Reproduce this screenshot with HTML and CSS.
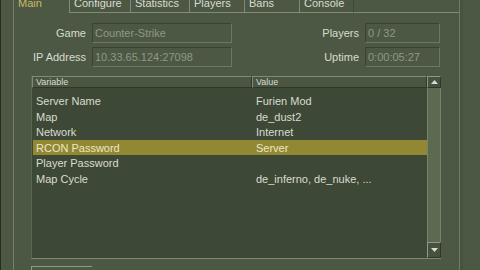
FILE: index.html
```html
<!DOCTYPE html>
<html>
<head>
<meta charset="utf-8">
<link rel="stylesheet" href="styles.css">
</head>
<body>
<div class="window">
  <div class="left-edge"></div>
  <div class="main">
    <div class="tabs">
      <div class="tab active">Main</div>
      <div class="tab w61">Configure</div>
      <div class="tab w58">Statistics</div>
      <div class="tab w55">Players</div>
      <div class="tab w55">Bans</div>
      <div class="tab w55 last">Console</div>
      <div class="tab-filler"></div>
    </div>
    <div class="sheet">
      <div class="fields">
        <div class="label">Game</div>
        <div class="box">Counter-Strike</div>
        <div class="label">Players</div>
        <div class="box">0 / 32</div>
        <div class="label">IP Address</div>
        <div class="box">10.33.65.124:27098</div>
        <div class="label">Uptime</div>
        <div class="box">0:00:05:27</div>
      </div>
      <div class="list">
        <div class="list-main">
          <div class="list-head">
            <div class="head-cell">Variable</div>
            <div class="head-cell">Value</div>
          </div>
          <div class="list-body">
            <div class="row"><span>Server Name</span><span>Furien Mod</span></div>
            <div class="row"><span>Map</span><span>de_dust2</span></div>
            <div class="row"><span>Network</span><span>Internet</span></div>
            <div class="row selected"><span>RCON Password</span><span>Server</span></div>
            <div class="row"><span>Player Password</span><span></span></div>
            <div class="row"><span>Map Cycle</span><span>de_inferno, de_nuke, ...</span></div>
          </div>
        </div>
        <div class="scroll">
          <div class="sbtn up"><svg width="7" height="4" viewBox="0 0 7 4"><polygon points="3.5,0 7,4 0,4" fill="#d8dccf"/></svg></div>
          <div class="track"></div>
          <div class="sbtn down"><svg width="7" height="4" viewBox="0 0 7 4"><polygon points="0,0 7,0 3.5,4" fill="#d8dccf"/></svg></div>
        </div>
      </div>
      <div class="bottom">
        <div class="button"></div>
      </div>
    </div>
  </div>
  <div class="right-edge"></div>
</div>
</body>
</html>
```

FILE: styles.css
```css
html, body {
  margin: 0;
  padding: 0;
}
body {
  width: 480px;
  height: 270px;
  overflow: hidden;
  background: #4c5844;
  font-family: "Liberation Sans", Arial, sans-serif;
  font-size: 11px;
  color: #d8dccf;
}
.window {
  display: flex;
  height: 270px;
}
.left-edge {
  flex: none;
  width: 14px;
  box-sizing: border-box;
  border-left: 1px solid #262c21;
  border-right: 1px solid #74806a;
}
.main {
  width: 446px;
  flex: none;
  display: flex;
  flex-direction: column;
  border-right: 1px solid #6f7b65;
  box-sizing: border-box;
}
.right-edge {
  flex: 1;
  border-left: 3px solid #48533f;
}
.tabs {
  display: flex;
  height: 16px;
  margin-top: -3px;
  flex: none;
}
.tab {
  box-sizing: border-box;
  height: 16px;
  line-height: 13px;
  padding-left: 4px;
  border-bottom: 1px solid #7f8b74;
  border-left: 1px solid #7f8b74;
  white-space: nowrap;
}
.tab.active {
  width: 55px;
  border: none;
  color: #c9b865;
  padding-left: 4px;
}
.tab.last {
  border-right: 1px solid #3f4837;
}
.w61 { width: 61px; }
.w58 { width: 59px; }
.w55 { width: 55px; }
.tab-filler {
  flex: 1;
  border-bottom: 1px solid #7f8b74;
}
.sheet {
  flex: 1;
  display: flex;
  flex-direction: column;
  padding-top: 10px;
}
.fields {
  display: grid;
  grid-template-columns: 72px 140px 121px 75px;
  grid-auto-rows: 20px;
  column-gap: 6px;
  row-gap: 4px;
}
.label {
  text-align: right;
  line-height: 20px;
}
.box {
  box-sizing: border-box;
  border: 1px solid;
  border-color: #3a4333 #6c785f #6c785f #3a4333;
  color: #8e9886;
  padding-left: 2px;
  line-height: 18px;
  white-space: nowrap;
}
.list {
  margin: 9px 0 0 17px;
  width: 410px;
  height: 183px;
  display: flex;
  border-left: 1px solid #5a6650;
  border-bottom: 1px solid #7d8a72;
  box-sizing: border-box;
  flex: none;
}
.list-main {
  width: 395px;
  display: flex;
  flex-direction: column;
  background: #3e4837;
}
.list-head {
  display: grid;
  grid-template-columns: 220px 1fr;
  height: 12px;
  flex: none;
}
.head-cell {
  box-sizing: border-box;
  background: #4a5642;
  border-top: 1px solid #7f8b74;
  border-left: 1px solid #7f8b74;
  border-bottom: 1px solid #2f372a;
  border-right: 1px solid #2f372a;
  font-size: 9px;
  line-height: 10px;
  padding-left: 3px;
}
.list-body {
  flex: 1;
  padding-top: 5px;
}
.row {
  display: grid;
  grid-template-columns: 220px 1fr;
  height: 15.5px;
  line-height: 16px;
  padding-left: 4px;
}
.row.selected {
  background: #928834;
  color: #ece7c4;
  margin-left: 1px;
  padding-left: 3px;
}
.scroll {
  width: 14px;
  display: flex;
  flex-direction: column;
  flex: none;
}
.sbtn {
  box-sizing: border-box;
  border: 1px solid;
  border-color: #8f9a85 #2f372a #2f372a #8f9a85;
  background: #46513f;
  display: flex;
  align-items: center;
  justify-content: center;
}
.sbtn.up { height: 12px; }
.sbtn.down { height: 16px; }
.track {
  flex: 1;
  background: #5c6a51;
  border-left: 1px solid #77846c;
  border-right: 1px solid #77846c;
}
.bottom {
  margin: 7px 0 0 17px;
}
.button {
  width: 61px;
  height: 10px;
  box-sizing: border-box;
  border-top: 1px solid #8f9a85;
  border-left: 1px solid #8f9a85;
}
```
